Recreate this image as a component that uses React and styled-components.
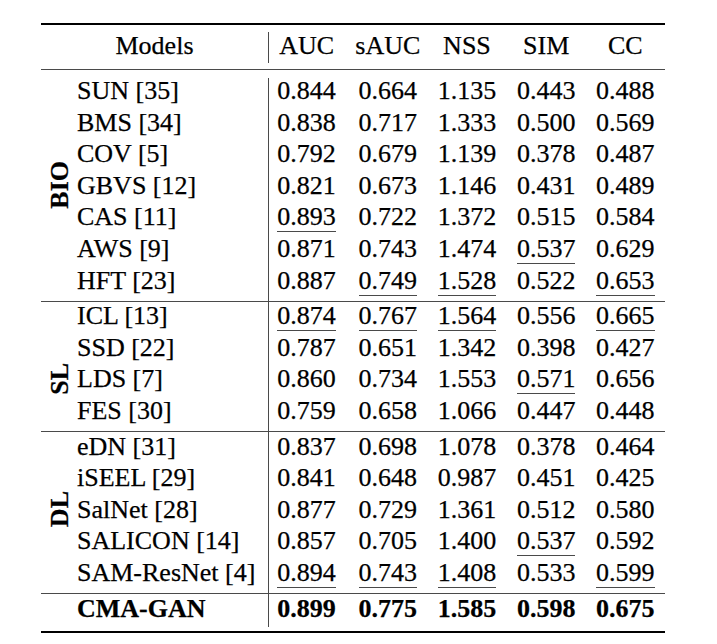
import React from 'react';
import styled, { createGlobalStyle } from 'styled-components';

const GlobalStyle = createGlobalStyle`
  body {
    margin: 0;
    background: #fff;
  }
`;

const ROW = 31.6;
const SEP = 4;
const COLS = '35px 192px 1px repeat(5, 79.2px)';
const RULE = '#4a4a4a';

const metrics = ['AUC', 'sAUC', 'NSS', 'SIM', 'CC'];

// a leading "_" marks the second best score (underlined)
// "at" is the first of the three rows the group label is centred on
const groups = [
  { label: 'BIO', at: 2, rows: [
    ['SUN [35]', '0.844 0.664 1.135 0.443 0.488'],
    ['BMS [34]', '0.838 0.717 1.333 0.500 0.569'],
    ['COV [5]', '0.792 0.679 1.139 0.378 0.487'],
    ['GBVS [12]', '0.821 0.673 1.146 0.431 0.489'],
    ['CAS [11]', '_0.893 0.722 1.372 0.515 0.584'],
    ['AWS [9]', '0.871 0.743 1.474 _0.537 0.629'],
    ['HFT [23]', '0.887 _0.749 _1.528 0.522 _0.653'],
  ]},
  { label: 'SL', at: 1, rows: [
    ['ICL [13]', '_0.874 _0.767 _1.564 0.556 _0.665'],
    ['SSD [22]', '0.787 0.651 1.342 0.398 0.427'],
    ['LDS [7]', '0.860 0.734 1.553 _0.571 0.656'],
    ['FES [30]', '0.759 0.658 1.066 0.447 0.448'],
  ]},
  { label: 'DL', at: 1, rows: [
    ['eDN [31]', '0.837 0.698 1.078 0.378 0.464'],
    ['iSEEL [29]', '0.841 0.648 0.987 0.451 0.425'],
    ['SalNet [28]', '0.877 0.729 1.361 0.512 0.580'],
    ['SALICON [14]', '0.857 0.705 1.400 _0.537 0.592'],
    ['SAM-ResNet [4]', '_0.894 _0.743 _1.408 0.533 _0.599'],
  ]},
  { bold: true, rows: [
    ['CMA-GAN', '0.899 0.775 1.585 0.598 0.675'],
  ]},
];

function App() {
  const tracks = [];
  const cells = [];
  let line = 1;

  groups.forEach((g, gi) => {
    if (g.label) {
      cells.push(
        <GroupLabel key={'l' + gi} $row={line + g.at}>
          <span>{g.label}</span>
        </GroupLabel>
      );
    }
    g.rows.forEach(([name, values], ri) => {
      const row = line + ri;
      tracks.push(`${ROW}px`);
      cells.push(<Name key={'n' + row} $row={row} $bold={g.bold}>{name}</Name>);
      values.split(' ').forEach((v, vi) => {
        const marked = v.startsWith('_');
        const text = marked ? v.slice(1) : v;
        cells.push(
          <Value key={row + '-' + vi} $row={row} $col={vi + 4} $bold={g.bold}>
            {marked ? <Mark>{text}</Mark> : text}
          </Value>
        );
      });
    });
    line += g.rows.length;
    if (gi < groups.length - 1) {
      tracks.push(`${SEP}px`);
      cells.push(<Separator key={'s' + gi} $row={line} />);
      line += 1;
    }
  });

  return (
    <>
      <GlobalStyle />
      <Sheet>
        <Rule $thick />
        <Head>
          <HeadModels>Models</HeadModels>
          <Divider />
          {metrics.map((m, i) => (
            <Metric key={m} $col={i + 4}>{m}</Metric>
          ))}
        </Head>
        <Rule />
        <Body $rows={tracks.join(' ')}>
          <Divider />
          {cells}
        </Body>
        <Rule $thick />
      </Sheet>
    </>
  );
}

const Sheet = styled.div`
  width: 624px;
  margin: 23px 0 0 41px;
  font-family: "Liberation Serif", "Times New Roman", serif;
  font-size: 26px;
  color: #000;
  -webkit-text-stroke: 0.25px #000;
`;

const Rule = styled.div`
  height: ${p => (p.$thick ? 2 : 1)}px;
  background: ${p => (p.$thick ? '#000' : RULE)};
`;

const Head = styled.div`
  display: grid;
  grid-template-columns: ${COLS};
  grid-template-rows: 31px;
  padding: 7px 0 6px;
  line-height: 28.5px;
`;

const HeadModels = styled.div`
  grid-column: 1 / 3;
  text-align: center;
`;

const Divider = styled.div`
  grid-column: 3;
  grid-row: 1 / -1;
  background: ${RULE};
`;

const Metric = styled.div`
  grid-column: ${p => p.$col};
  text-align: center;
  padding-right: ${p => (p.$col === 4 ? 4 : 0)}px;
`;

const Body = styled.div`
  display: grid;
  grid-template-columns: ${COLS};
  grid-template-rows: ${p => p.$rows};
  margin: 8px 0 3.5px;
  line-height: 25.44px;
`;

const GroupLabel = styled.div`
  grid-column: 1;
  grid-row: ${p => p.$row} / span 3;
  display: flex;
  align-items: center;
  justify-content: center;
  padding: 0 0 7px 2px;
  font-weight: 700;

  span {
    writing-mode: vertical-rl;
    transform: rotate(180deg);
    line-height: 1;
  }
`;

const Name = styled.div`
  grid-column: 2;
  grid-row: ${p => p.$row};
  padding-left: 1px;
  white-space: nowrap;
  font-weight: ${p => (p.$bold ? 700 : 400)};
`;

const Value = styled.div`
  grid-column: ${p => p.$col};
  grid-row: ${p => p.$row};
  text-align: center;
  padding-right: ${p => (p.$col === 4 ? 4 : 0)}px;
  font-weight: ${p => (p.$bold ? 700 : 400)};
`;

const Mark = styled.span`
  border-bottom: 1px solid ${RULE};
`;

const Separator = styled.div`
  grid-column: 1 / -1;
  grid-row: ${p => p.$row};
  align-self: center;
  height: 1px;
  background: ${RULE};
`;

export default App;
